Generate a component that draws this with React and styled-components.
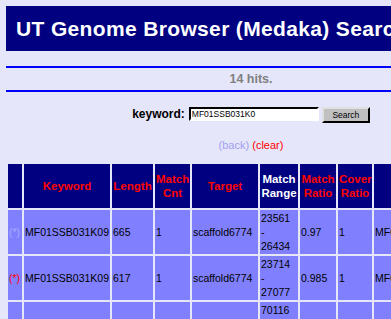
import React from "react";
import styled, { createGlobalStyle } from "styled-components";

const GlobalStyle = createGlobalStyle`
  html, body {
    margin: 0;
    padding: 0;
    background: #e6e6fa;
    overflow: hidden;
  }
  body {
    font-family: "Liberation Sans", Arial, sans-serif;
  }
`;

const Page = styled.div`
  width: 490px;
  padding: 6px 0 0 6px;
`;

const Banner = styled.h1`
  margin: 0;
  height: 45px;
  display: flex;
  align-items: center;
  padding-left: 10px;
  background: #000080;
  color: #ffffff;
  font-size: 21px;
  letter-spacing: 0.35px;
  font-weight: bold;
  white-space: nowrap;
`;

const Rule = styled.div`
  height: 2px;
  background: #0000ff;
  margin-top: ${(p) => p.$top || 0}px;
`;

const Hits = styled.div`
  height: 22px;
  display: flex;
  align-items: center;
  justify-content: center;
  color: #808080;
  font-size: 12.5px;
  font-weight: bold;
`;

const SearchForm = styled.form`
  margin: 15px 0 0;
  display: flex;
  justify-content: center;
  align-items: flex-start;
`;

const Label = styled.label`
  font-size: 12px;
  font-weight: bold;
  color: #000;
  line-height: 14px;
  margin-right: 4px;
`;

const KeywordInput = styled.input`
  box-sizing: border-box;
  width: 130px;
  height: 14px;
  padding: 0 1px;
  border: 2px inset #e0e0e0;
  border-top-color: #404040;
  border-left-color: #404040;
  border-right-color: #ffffff;
  border-bottom-color: #ffffff;
  background: #ffffff;
  font-family: "Liberation Sans", Arial, sans-serif;
  font-size: 8.5px;
  color: #000;
  outline: none;
`;

const Button = styled.button`
  box-sizing: border-box;
  width: 48px;
  height: 16px;
  margin-left: 3px;
  padding: 0;
  background: #c0c0c0;
  border: 2px outset #e0e0e0;
  border-right-color: #404040;
  border-bottom-color: #404040;
  font-family: "Liberation Sans", Arial, sans-serif;
  font-size: 8.5px;
  color: #000;
`;

const Links = styled.div`
  margin-top: 16px;
  text-align: center;
  font-size: 11px;
  line-height: 13px;
`;

const NavLink = styled.a`
  color: ${(p) => (p.$active ? "#ff0000" : "#a0a0f0")};
  text-decoration: none;
`;

const Table = styled.table`
  margin-top: 10px;
  table-layout: fixed;
  width: 456px;
  border-collapse: separate;
  border-spacing: 2px;
  font-family: "Liberation Sans", Arial, sans-serif;
`;

const Col = styled.col`
  width: ${(p) => p.$w}px;
`;

const Th = styled.th`
  background: #000080;
  color: ${(p) => (p.$white ? "#ffffff" : "#ff0000")};
  font-size: 11.5px;
  font-weight: bold;
  line-height: 14px;
  height: 42px;
  padding: 1px;
  text-align: center;
  vertical-align: middle;
  white-space: nowrap;
`;

const Td = styled.td`
  background: #8080ff;
  color: #000;
  font-size: 10.5px;
  line-height: 14px;
  height: 42px;
  padding: 1px;
  text-align: left;
  vertical-align: middle;
  white-space: nowrap;
`;

const Mark = styled.span`
  color: ${(p) => (p.$active ? "#ff0000" : "#a8a8ff")};
`;

const cols = [14, 86, 41, 35, 66, 38, 36, 34, 86];

const rows = [
  { mark: false, kw: "MF01SSB031K09", len: "665", cnt: "1", target: "scaffold6774", from: "23561", to: "26434", mr: "0.97", cr: "1", id: "MF01SSB031K09" },
  { mark: true, kw: "MF01SSB031K09", len: "617", cnt: "1", target: "scaffold6774", from: "23714", to: "27077", mr: "0.985", cr: "1", id: "MF01SSB031K09" },
  { mark: false, kw: "MF01SSB031K09", len: "665", cnt: "1", target: "scaffold6774", from: "70116", to: "73012", mr: "0.96", cr: "1", id: "MF01SSB031K09" },
];

export default function App() {
  return (
    <>
      <GlobalStyle />
      <Page>
        <Banner>UT Genome Browser (Medaka) Search</Banner>
        <Rule $top={15} />
        <Hits>14 hits.</Hits>
        <Rule />
        <SearchForm onSubmit={(e) => e.preventDefault()}>
          <Label htmlFor="kw">keyword:</Label>
          <KeywordInput id="kw" defaultValue="MF01SSB031K0" />
          <Button type="submit">Search</Button>
        </SearchForm>
        <Links>
          <NavLink href="#">(back)</NavLink> <NavLink href="#" $active>(clear)</NavLink>
        </Links>
        <Table>
          <colgroup>
            {cols.map((w, i) => (
              <Col key={i} $w={w} />
            ))}
          </colgroup>
          <thead>
            <tr>
              <Th />
              <Th>Keyword</Th>
              <Th>Length</Th>
              <Th>Match<br />Cnt</Th>
              <Th>Target</Th>
              <Th $white>Match<br />Range</Th>
              <Th>Match<br />Ratio</Th>
              <Th>Cover<br />Ratio</Th>
              <Th>ID</Th>
            </tr>
          </thead>
          <tbody>
            {rows.map((r, i) => (
              <tr key={i}>
                <Td><Mark $active={r.mark}>(*)</Mark></Td>
                <Td>{r.kw}</Td>
                <Td>{r.len}</Td>
                <Td>{r.cnt}</Td>
                <Td>{r.target}</Td>
                <Td>{r.from}<br />-<br />{r.to}</Td>
                <Td>{r.mr}</Td>
                <Td>{r.cr}</Td>
                <Td>{r.id}</Td>
              </tr>
            ))}
          </tbody>
        </Table>
      </Page>
    </>
  );
}
